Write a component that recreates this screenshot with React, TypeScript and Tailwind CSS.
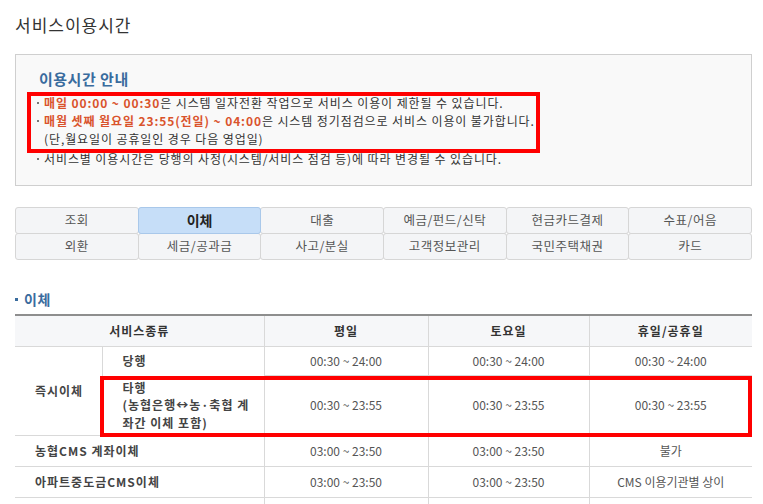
import React from "react";

const TABS = [
  ["조회", "이체", "대출", "예금/펀드/신탁", "현금카드결제", "수표/어음"],
  ["외환", "세금/공과금", "사고/분실", "고객정보관리", "국민주택채권", "카드"],
];

const FONT = { fontFamily: '"Noto Sans CJK KR", "Noto Sans", sans-serif' };

function Dot() {
  return <span className="mr-[5px] inline-block h-[2px] w-[2px] -translate-y-[4px] bg-[#777]" />;
}

function TimeCell({ children }: { children?: React.ReactNode }) {
  return (
    <td className="border-l border-b border-[#d9d9d9] text-center align-middle text-[12px] font-normal tracking-normal text-[#555]">
      {children}
    </td>
  );
}

export default function App() {
  return (
    <div className="relative h-[504px] w-[763px] overflow-hidden bg-white" style={FONT}>
      <div className="pl-[15px] pr-[11px]">
        <h1 className="flex h-[50px] items-center text-[17px] font-normal tracking-[1px] text-[#333]">서비스이용시간</h1>

        <div className="mt-[4px] h-[132px] border border-[#cfcfcf] bg-[#f9f9f9] pl-[21px] pt-[12px]">
          <h2 className="flex h-[24px] items-center pl-[2px] text-[15px] font-semibold tracking-[0.5px] text-[#3a6c9e]">
            이용시간 안내
          </h2>
          <div className="mt-[3px] text-[12px] tracking-[0.9px] text-[#333]">
            <p className="h-[18px] leading-[18px]">
              <Dot />
              <span className="font-bold text-[#d9532c]">매일 00:00 ~ 00:30</span>은 시스템 일자전환 작업으로 서비스 이용이 제한될 수 있습니다.
            </p>
            <p className="h-[17.5px] leading-[17.5px]">
              <Dot />
              <span className="font-bold text-[#d9532c]">매월 셋째 월요일 23:55(전일) ~ 04:00</span>은 시스템 정기점검으로 서비스 이용이 불가합니다.
            </p>
            <p className="h-[17.5px] pl-[7px] leading-[17.5px]">(단,월요일이 공휴일인 경우 다음 영업일)</p>
            <p className="mt-[3px] h-[18px] leading-[18px]">
              <Dot />
              서비스별 이용시간은 당행의 사정(시스템/서비스 점검 등)에 따라 변경될 수 있습니다.
            </p>
          </div>
        </div>

        <div className="mt-[21px]">
          {TABS.map((row, r) => (
            <div key={r} className={r === 0 ? "flex" : "-mt-px flex"}>
              {row.map((t, i) => {
                const active = t === "이체";
                return (
                  <div
                    key={t}
                    className={
                      (i === 0 ? "" : "-ml-px ") +
                      (active
                        ? "relative z-10 flex h-[27px] w-[124px] items-center justify-center rounded-[3px] border border-[#a9c8ea] bg-[#c6def8] text-[14px] font-bold text-[#222]"
                        : "flex h-[27px] w-[124px] items-center justify-center rounded-[3px] border border-[#d6d6d6] bg-[#f4f5f7] text-[12.5px] tracking-[0.5px] text-[#555]")
                    }
                  >
                    {t}
                  </div>
                );
              })}
            </div>
          ))}
        </div>

        <h3 className="mt-[29px] flex h-[20px] items-center text-[14px] font-bold tracking-[0.5px] text-[#3a6c9e]">
          <span className="mr-[6px] inline-block h-[3px] w-[3px] bg-[#3a6c9e]" />
          이체
        </h3>

        <table className="mt-[5px] w-[737px] table-fixed border-collapse border-t-2 border-[#8e8e8e]">
          <colgroup>
            <col className="w-[87px]" />
            <col className="w-[162px]" />
            <col className="w-[164px]" />
            <col className="w-[161px]" />
            <col className="w-[163px]" />
          </colgroup>
          <thead>
            <tr className="h-[31px] bg-[#f6f7f9] text-[12px] tracking-[1px] text-[#333]">
              <th colSpan={2} className="border-b border-[#d9d9d9] text-center font-bold">서비스종류</th>
              <th className="border-l border-b border-[#d9d9d9] text-center font-bold">평일</th>
              <th className="border-l border-b border-[#d9d9d9] text-center font-bold">토요일</th>
              <th className="border-l border-b border-[#d9d9d9] text-center font-bold">휴일/공휴일</th>
            </tr>
          </thead>
          <tbody className="text-[12px] font-bold tracking-[1px] text-[#444]">
            <tr className="h-[29px]">
              <td rowSpan={2} className="border-b border-[#d9d9d9] pl-[20px] align-middle">즉시이체</td>
              <td className="border-l border-[#d9d9d9] pl-[20px]">당행</td>
              <TimeCell>00:30 ~ 24:00</TimeCell>
              <TimeCell>00:30 ~ 24:00</TimeCell>
              <TimeCell>00:30 ~ 24:00</TimeCell>
            </tr>
            <tr className="h-[60px]">
              <td className="border-l border-b border-[#d9d9d9] pl-[20px] leading-[17.5px]">
                타행
                <br />
                (농협은행↔농·축협 계
                <br />
                좌간 이체 포함)
              </td>
              <TimeCell>00:30 ~ 23:55</TimeCell>
              <TimeCell>00:30 ~ 23:55</TimeCell>
              <TimeCell>00:30 ~ 23:55</TimeCell>
            </tr>
            <tr className="h-[31px]">
              <td colSpan={2} className="border-b border-[#d9d9d9] pl-[20px]">농협CMS 계좌이체</td>
              <TimeCell>03:00 ~ 23:50</TimeCell>
              <TimeCell>03:00 ~ 23:50</TimeCell>
              <TimeCell>불가</TimeCell>
            </tr>
            <tr className="h-[31px]">
              <td colSpan={2} className="border-b border-[#d9d9d9] pl-[20px]">아파트중도금CMS이체</td>
              <TimeCell>03:00 ~ 23:50</TimeCell>
              <TimeCell>03:00 ~ 23:50</TimeCell>
              <TimeCell>CMS 이용기관별 상이</TimeCell>
            </tr>
            <tr className="h-[31px]">
              <td colSpan={2} className="border-b border-[#d9d9d9] pl-[20px]"></td>
              <TimeCell />
              <TimeCell />
              <TimeCell />
            </tr>
          </tbody>
        </table>
      </div>

      {/* red annotation boxes */}
      <div className="pointer-events-none absolute left-[27px] top-[92px] h-[61px] w-[513px] border-4 border-[#f00]" />
      <div className="pointer-events-none absolute left-[100px] top-[376px] h-[61px] w-[652px] border-4 border-[#f00]" />
    </div>
  );
}
